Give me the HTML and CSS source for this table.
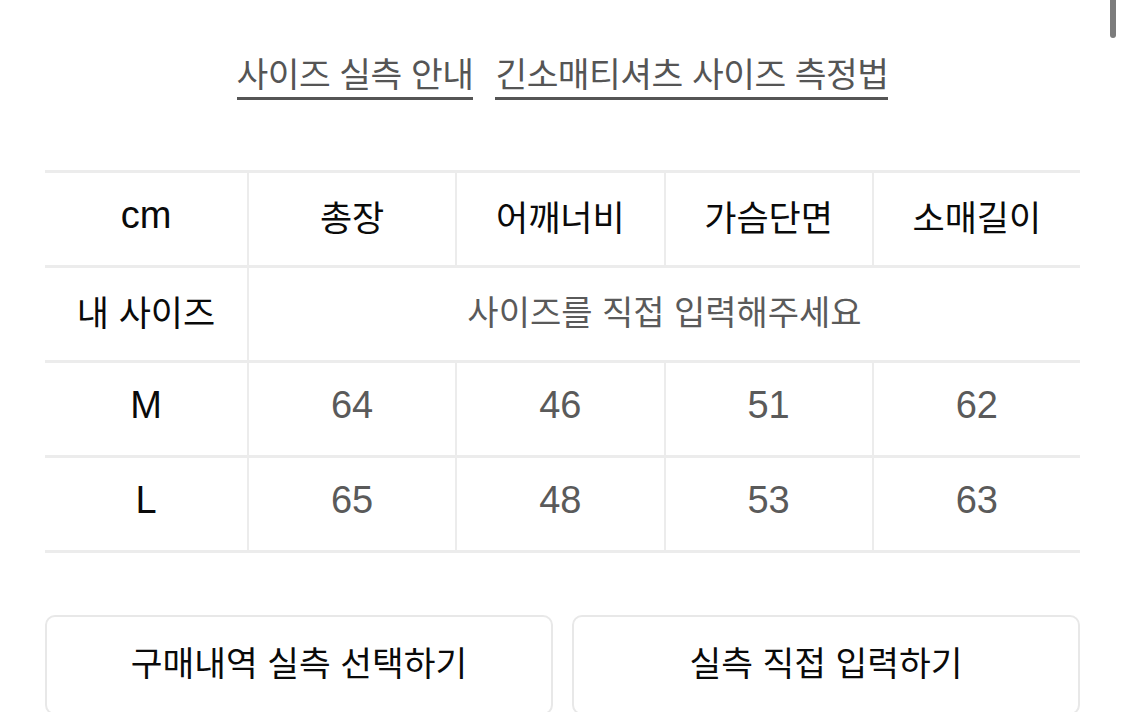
FILE: index.html
```html
<!DOCTYPE html>
<html lang="ko">
<head>
<meta charset="utf-8">
<link rel="stylesheet" href="styles.css">
</head>
<body>
<div class="page">
  <div class="links">
    <a class="link">사이즈 실측 안내</a>
    <a class="link">긴소매티셔츠 사이즈 측정법</a>
  </div>
  <div class="size-table">
    <div class="cell head latin">cm</div>
    <div class="cell head">총장</div>
    <div class="cell head">어깨너비</div>
    <div class="cell head">가슴단면</div>
    <div class="cell head">소매길이</div>

    <div class="cell head">내 사이즈</div>
    <div class="cell value span4">사이즈를 직접 입력해주세요</div>

    <div class="cell head latin">M</div>
    <div class="cell value latin">64</div>
    <div class="cell value latin">46</div>
    <div class="cell value latin">51</div>
    <div class="cell value latin">62</div>

    <div class="cell head latin">L</div>
    <div class="cell value latin">65</div>
    <div class="cell value latin">48</div>
    <div class="cell value latin">53</div>
    <div class="cell value latin">63</div>
  </div>
  <div class="buttons">
    <button class="btn">구매내역 실측 선택하기</button>
    <button class="btn">실측 직접 입력하기</button>
  </div>
</div>
<div class="scrollbar"></div>
</body>
</html>
```

FILE: styles.css
```css
html, body {
  margin: 0;
  padding: 0;
  background: #ffffff;
  overflow: hidden;
}
body {
  font-family: "Liberation Sans", "Noto Sans CJK KR", sans-serif;
  color: #111111;
}
.page {
  padding: 0 45px;
}
.links {
  display: flex;
  justify-content: center;
  gap: 22px;
  padding-top: 53px;
  height: 170px;
  box-sizing: border-box;
}
.link {
  font-size: 34.5px;
  line-height: 44px;
  height: 44px;
  color: #555555;
  text-decoration: none;
  border-bottom: 3px solid #555555;
  letter-spacing: -0.5px;
}
.size-table {
  display: grid;
  grid-template-columns: 202px repeat(4, 1fr);
  grid-auto-rows: 92px;
  column-gap: 2px;
  row-gap: 3px;
  padding: 3px 0;
  background: #ececec;
}
.cell {
  background: #ffffff;
  display: flex;
  align-items: center;
  justify-content: center;
  font-size: 34px;
  padding-bottom: 7px;
}
.head {
  color: #0a0a0a;
  font-size: 35px;
}
.value {
  color: #5a5a5a;
}
.latin {
  font-size: 38px;
}
.span4 {
  grid-column: span 4;
}
.buttons {
  display: flex;
  gap: 19px;
  margin-top: 62px;
}
.btn {
  flex: 1;
  height: 100px;
  padding: 0 0 8px 0;
  background: #ffffff;
  border: 2px solid #e8e8e8;
  border-radius: 10px;
  font-family: "Liberation Sans", "Noto Sans CJK KR", sans-serif;
  font-size: 34.5px;
  color: #0a0a0a;
}
.scrollbar {
  position: absolute;
  top: 0;
  left: 1110px;
  width: 6px;
  height: 38px;
  background: #7c7c7c;
  border-radius: 0 0 3px 3px;
}
```
